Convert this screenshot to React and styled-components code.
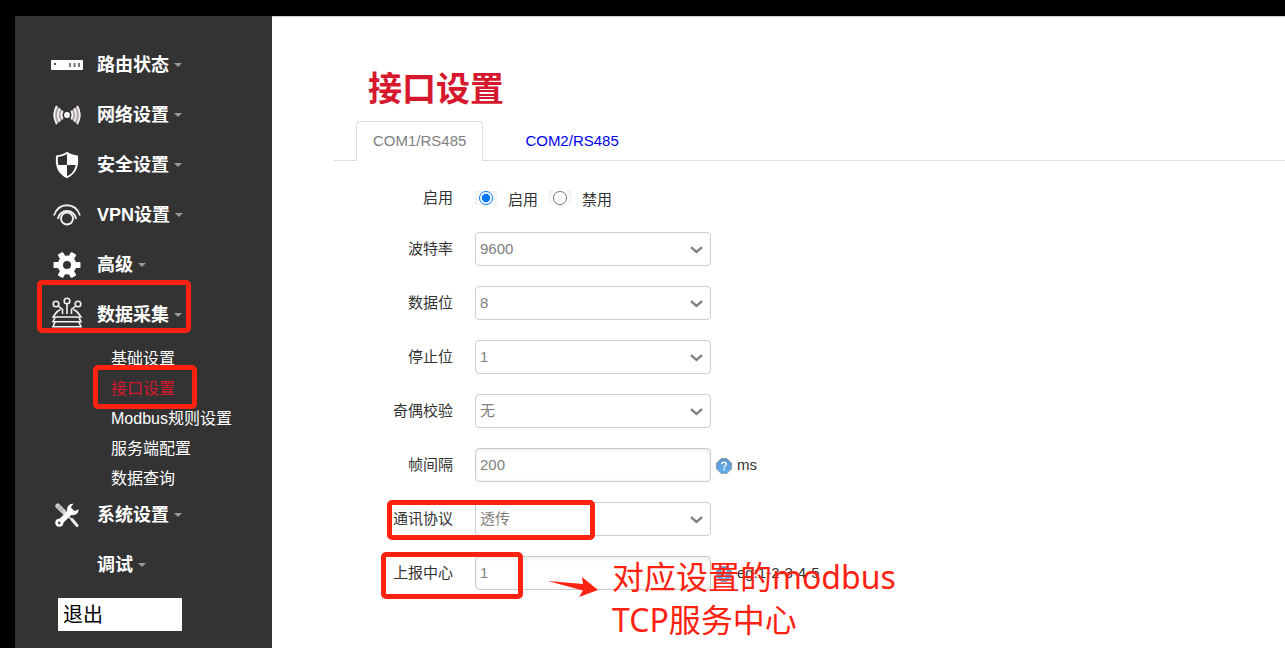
import React, { useState } from "react";
import styled, { createGlobalStyle, css } from "styled-components";

const GlobalStyle = createGlobalStyle`
  *, *::before, *::after { box-sizing: border-box; }
  body {
    margin: 0;
    background: #000;
    color: #333;
    font-family: "Liberation Sans", "Noto Sans CJK SC", sans-serif;
    font-size: 15px;
    line-height: 20px;
  }
  button, input, select { font-family: inherit; }
`;

const red = "#d6182e";
const marker = "#ff2211";

const Shell = styled.div`
  display: flex;
  min-height: 100vh;
  padding: 16px 0 0 15px;
`;

const Sidebar = styled.nav`
  flex: 0 0 257px;
  padding: 24px 0 18px;
  background: #333;
`;

const Menu = styled.ul`
  margin: 0;
  padding: 0;
  list-style: none;
`;

const MenuEntry = styled.li`
  position: relative;
`;

const MenuButton = styled.button`
  display: flex;
  align-items: center;
  gap: 14px;
  width: 100%;
  height: 50px;
  padding: 0 0 0 35px;
  border: 0;
  background: none;
  color: #fff;
  font-size: 18px;
  font-weight: 700;
  line-height: 24px;
  text-align: left;
  cursor: pointer;
`;

const IconSlot = styled.span`
  display: flex;
  justify-content: center;
  width: 33px;

  svg { display: block; }
`;

const MenuLabel = styled.span`
  display: flex;
  align-items: center;
  gap: 5px;

  &::after {
    content: "";
    border: 4px solid transparent;
    border-top-color: #999;
    border-bottom: 0;
  }
`;

const SubMenu = styled.ul`
  display: flex;
  flex-direction: column;
  gap: 8px;
  margin: 0;
  padding: 8px 0 0 96px;
  list-style: none;
`;

const SubEntry = styled.li`
  position: relative;
  height: 22px;
`;

const SubLink = styled.a`
  color: ${(p) => (p.$active ? red : "#fff")};
  font-size: 16px;
  line-height: 22px;
  text-decoration: none;
`;

const Logout = styled.button`
  display: block;
  width: 124px;
  height: 33px;
  margin: 8px 0 0 43px;
  padding: 0 5px;
  border: 0;
  background: #fff;
  color: #000;
  font-size: 20px;
  line-height: 32px;
  text-align: left;
  cursor: pointer;
`;

const Main = styled.main`
  flex: 1;
  min-width: 0;
  padding: 48px 0 40px 62px;
  border-top: 1px solid #ccc;
  background: #fff;
`;

const Title = styled.h1`
  margin: 0 0 8px;
  padding-left: 34px;
  color: ${red};
  font-size: 34px;
  font-weight: 700;
  line-height: 48px;
`;

const Tabs = styled.div`
  display: flex;
  gap: 25px;
  height: 40px;
  padding-left: 22px;
  border-bottom: 1px solid #ddd;
`;

const Tab = styled.a`
  height: 40px;
  padding: 0 16px;
  border: 1px solid transparent;
  border-bottom: 0;
  border-radius: 4px 4px 0 0;
  color: #00e;
  line-height: 38px;
  text-decoration: none;
  ${(p) => p.$active && css`
    border-color: #ddd;
    background: #fff;
    color: #808080;
  `}
`;

const Form = styled.form`
  display: flex;
  flex-direction: column;
  gap: 20px;
  padding-top: 23px;
`;

const Row = styled.div`
  position: relative;
  display: grid;
  grid-template-columns: 119px 1fr;
  column-gap: 22px;
  align-items: center;
  min-height: ${(p) => (p.$compact ? 28 : 34)}px;
`;

const RowLabel = styled.label`
  text-align: right;
`;

const Control = styled.div`
  display: flex;
  align-items: center;
  gap: ${(p) => (p.$wide ? 11 : 5)}px;
`;

const field = css`
  width: 236px;
  height: 34px;
  padding: 0 4px 1px;
  border: 1px solid #ccc;
  border-radius: 4px;
  background: #fff;
  color: #808080;
  font-size: 15px;
`;

const TextBox = styled.input`
  ${field}
  box-shadow: inset 0 1px 4px rgba(0, 0, 0, 0.09);
`;

const SelectWrap = styled.div`
  display: grid;
  align-items: center;

  > * { grid-area: 1 / 1; }
  > svg {
    justify-self: end;
    margin: 2px 8px 0 0;
    pointer-events: none;
  }
`;

const SelectBox = styled.select`
  ${field}
  appearance: none;
`;

const RadioOption = styled.label`
  display: flex;
  align-items: center;
  gap: 11px;

  > span:last-child { padding-top: 4px; }
`;

const RadioFrame = styled.span`
  display: flex;
  justify-content: center;
  width: 22px;
  height: 14px;
  background: #fff;
  box-shadow: inset 0 1px 4px rgba(0, 0, 0, 0.1);

  input { width: 14px; height: 14px; margin: 0; }
`;

const Hint = styled.span`
  display: flex;
  align-items: center;
  gap: 5px;

  svg { margin-top: 2px; }
`;

const Highlight = styled.span`
  position: absolute;
  top: ${(p) => p.$top}px;
  left: ${(p) => p.$left}px;
  width: ${(p) => p.$width}px;
  height: ${(p) => p.$height}px;
  border: 5px solid ${marker};
  border-radius: 5px;
  pointer-events: none;
`;

const Note = styled.p`
  position: absolute;
  top: -1px;
  left: 214px;
  display: flex;
  gap: 14px;
  margin: 0;
  color: ${marker};
  font-family: "Noto Sans", "Noto Sans CJK SC", sans-serif;
  font-size: 32px;
  line-height: 43px;
  white-space: nowrap;
  pointer-events: none;

  svg { margin-top: 22px; }
`;

const icons = {
  router: (
    <svg width="32" height="10" viewBox="0 0 32 10">
      <rect width="32" height="10" rx="1" fill="#fff" />
      <rect x="3" y="3" width="2" height="2" fill="#555" />
      <g fill="#777">
        <rect x="18" y="3" width="2" height="4" />
        <rect x="22.500" y="3" width="2" height="4" />
        <rect x="27" y="3" width="2" height="4" />
      </g>
    </svg>
  ),
  network: (
    <svg width="28" height="20" viewBox="0 0 28 20" fill="none" stroke="#f4eeee" strokeLinecap="round">
      <circle cx="14" cy="10" r="2.900" fill="#fff" stroke="none" />
      <path d="M3.500 1C-.5 6 -.5 14 3.500 19L10 14Q7.500 10 10 6ZM24.500 1C28.500 6 28.500 14 24.500 19L18 14Q20.500 10 18 6Z" fill="#a8a4a4" stroke="none" />
      <path d="M9.500 6.500Q7.500 10 9.500 13.500M18.500 6.500Q20.500 10 18.500 13.500" strokeWidth="1.800" />
      <path d="M6.500 4Q3.500 10 6.500 16M21.500 4Q24.500 10 21.500 16" strokeWidth="1.800" />
      <path d="M3.500 1.500Q-1 10 3.500 18.500M24.500 1.500Q29 10 24.500 18.500" strokeWidth="1.800" />
    </svg>
  ),
  shield: (
    <svg width="24" height="28" viewBox="0 0 24 28">
      <path d="M12 .8C9 3 5.300 4.300 1.200 4.500C-.2 14 2 22.300 12 27.200C22 22.300 24.200 14 22.800 4.500C18.700 4.300 15 3 12 .8Z" fill="#fff" />
      <path d="M12 3V14H3.300C2.800 11 2.700 8.500 2.900 6C6 5.500 9 4.800 12 3Z" fill="#333" />
      <path d="M12 14H20.700C19.500 19.500 17 23 12 25.200Z" fill="#333" />
    </svg>
  ),
  vpn: (
    <svg width="28" height="22" viewBox="0 0 28 22" fill="none" stroke="#eee" strokeWidth="1.900">
      <circle cx="14" cy="14.500" r="6" />
      <path d="M4.800 15A9.300 9.300 0 0 1 23.200 15" />
      <path d="M1 11.500C3.300 4.800 8.300 1.300 14 1.300S24.700 4.800 27 11.500" />
    </svg>
  ),
  gear: (
    <svg width="28" height="26" viewBox="0 0 28 26">
      <g fill="#fff">
        <rect x=".5" y="10" width="27" height="6" rx="1" />
        <rect x=".5" y="10" width="27" height="6" rx="1" transform="rotate(60 14 13)" />
        <rect x=".5" y="10" width="27" height="6" rx="1" transform="rotate(120 14 13)" />
        <circle cx="14" cy="13" r="9.400" />
      </g>
      <circle cx="14" cy="13" r="4" fill="#333" />
    </svg>
  ),
  collect: (
    <svg width="32" height="36" viewBox="0 0 32 36" fill="none" stroke="#f2f2f2" strokeWidth="1.600">
      <circle cx="16" cy="4" r="2.800" />
      <circle cx="5" cy="7" r="2.800" />
      <circle cx="27" cy="7" r="2.800" />
      <path d="M16 7V17M7.200 9L11.500 12.500V17M24.800 9L20.500 12.500V17" />
      <path d="M9.500 12.500C5.500 14 4 17 2 20H30C28 17 26.500 14 22.500 12.500" />
      <path d="M4 20.500L2 24.800H30L28 20.500M4 25.300L2 29.800H30L28 25.300" />
    </svg>
  ),
  tools: (
    <svg width="24" height="24" viewBox="0 0 24 24" fill="none">
      <path d="M2.800 3L9.500 9.500" stroke="#ccc" strokeWidth="5" strokeLinecap="round" />
      <path d="M3 5.500L5.500 2.500M5.500 8L8 5" stroke="#777" strokeWidth=".8" />
      <path d="M9 9L18 18" stroke="#ddd" strokeWidth="1.600" />
      <path d="M17 16.500L22 22.500" stroke="#eee" strokeWidth="3" strokeLinecap="round" />
      <path d="M4.300 19.700L16 8.500" stroke="#fff" strokeWidth="5.600" strokeLinecap="round" />
      <path d="M18.500 .8A5.800 5.800 0 1 0 23.600 6.200L20 8L16.800 6.800L16 4Z" fill="#fff" />
      <circle cx="4.300" cy="19.700" r="4" fill="#fff" />
      <circle cx="4.300" cy="19.900" r="1.300" fill="#444" />
    </svg>
  ),
};

const Chevron = () => (
  <svg width="13" height="8" viewBox="0 0 13 8" fill="none" stroke="#808080" strokeWidth="2.400">
    <path d="M1 1.200L6.500 6L12 1.200" />
  </svg>
);

const HelpIcon = () => (
  <svg width="16" height="16" viewBox="0 0 16 16" role="img" aria-label="帮助">
    <defs>
      <linearGradient id="helpFill" x1="0" y1="0" x2="0" y2="1">
        <stop offset="0" stopColor="#5b93cc" />
        <stop offset="1" stopColor="#5fb2f0" />
      </linearGradient>
    </defs>
    <path d="M5 .7H11L15.300 5V11L11 15.300H5L.7 11V5Z" fill="url(#helpFill)" stroke="#7890a8" strokeLinejoin="round" />
    <path d="M5.800 6.300C5.800 3.500 10.300 3.500 10.300 6.200C10.300 7.800 8.100 7.800 8.100 9.700" fill="none" stroke="#fff" strokeWidth="1.500" />
    <rect x="7.300" y="10.800" width="1.600" height="1.600" fill="#fff" />
  </svg>
);

const Arrow = () => (
  <svg width="50" height="21" viewBox="0 0 50 21" fill={marker}>
    <path d="M0 4L35 7L34 0L50 13L31 20L35 13.500Z" />
  </svg>
);

const menu = [
  { label: "路由状态", icon: "router" },
  { label: "网络设置", icon: "network" },
  { label: "安全设置", icon: "shield" },
  { label: "VPN设置", icon: "vpn" },
  { label: "高级", icon: "gear" },
  {
    label: "数据采集",
    icon: "collect",
    marked: true,
    children: ["基础设置", "接口设置", "Modbus规则设置", "服务端配置", "数据查询"],
  },
  { label: "系统设置", icon: "tools" },
  { label: "调试" },
];

const selects = [
  { id: "baud", label: "波特率", options: ["9600", "19200", "115200"] },
  { id: "data", label: "数据位", options: ["8", "7"] },
  { id: "stop", label: "停止位", options: ["1", "2"] },
  { id: "parity", label: "奇偶校验", options: ["无", "奇", "偶"] },
];

function SelectRow({ id, label, options, children }) {
  return (
    <Row>
      <RowLabel htmlFor={id}>{label}</RowLabel>
      <Control>
        <SelectWrap>
          <SelectBox id={id}>
            {options.map((o) => <option key={o}>{o}</option>)}
          </SelectBox>
          <Chevron />
        </SelectWrap>
      </Control>
      {children}
    </Row>
  );
}

function TextRow({ id, label, value, hint, children }) {
  return (
    <Row>
      <RowLabel htmlFor={id}>{label}</RowLabel>
      <Control>
        <TextBox id={id} type="text" defaultValue={value} />
        <Hint><HelpIcon />{hint}</Hint>
      </Control>
      {children}
    </Row>
  );
}

export default function App() {
  const [enabled, setEnabled] = useState("启用");
  return (
    <>
      <GlobalStyle />
      <Shell>
        <Sidebar>
          <Menu>
            {menu.map((item) => (
              <MenuEntry key={item.label}>
                <MenuButton type="button">
                  <IconSlot>{icons[item.icon]}</IconSlot>
                  <MenuLabel>{item.label}</MenuLabel>
                </MenuButton>
                {item.marked && <Highlight $top={-10} $left={22} $width={154} $height={53} />}
                {item.children && (
                  <SubMenu>
                    {item.children.map((name) => (
                      <SubEntry key={name}>
                        <SubLink href="#" $active={name === "接口设置"}>{name}</SubLink>
                        {name === "接口设置" && (
                          <Highlight $top={-13} $left={-18} $width={104} $height={44} />
                        )}
                      </SubEntry>
                    ))}
                  </SubMenu>
                )}
              </MenuEntry>
            ))}
          </Menu>
          <Logout type="button">退出</Logout>
        </Sidebar>
        <Main>
          <Title>接口设置</Title>
          <Tabs>
            <Tab href="#com1" $active>COM1/RS485</Tab>
            <Tab href="#com2">COM2/RS485</Tab>
          </Tabs>
          <Form>
            <Row $compact role="radiogroup" aria-labelledby="enable">
              <RowLabel as="span" id="enable">启用</RowLabel>
              <Control $wide>
                {["启用", "禁用"].map((name) => (
                  <RadioOption key={name}>
                    <RadioFrame>
                      <input
                        type="radio"
                        name="enable"
                        checked={enabled === name}
                        onChange={() => setEnabled(name)}
                      />
                    </RadioFrame>
                    <span>{name}</span>
                  </RadioOption>
                ))}
              </Control>
            </Row>
            {selects.map((s) => <SelectRow key={s.id} {...s} />)}
            <TextRow id="interval" label="帧间隔" value="200" hint="ms" />
            <SelectRow id="protocol" label="通讯协议" options={["透传", "Modbus"]}>
              <Highlight $top={-2} $left={53} $width={208} $height={40} />
            </SelectRow>
            <TextRow id="center" label="上报中心" value="1" hint="eg:1-2-3-4-5">
              <Highlight $top={-4} $left={47} $width={142} $height={47} />
              <Note>
                <Arrow />
                <span>对应设置的modbus<br />TCP服务中心</span>
              </Note>
            </TextRow>
          </Form>
        </Main>
      </Shell>
    </>
  );
}
